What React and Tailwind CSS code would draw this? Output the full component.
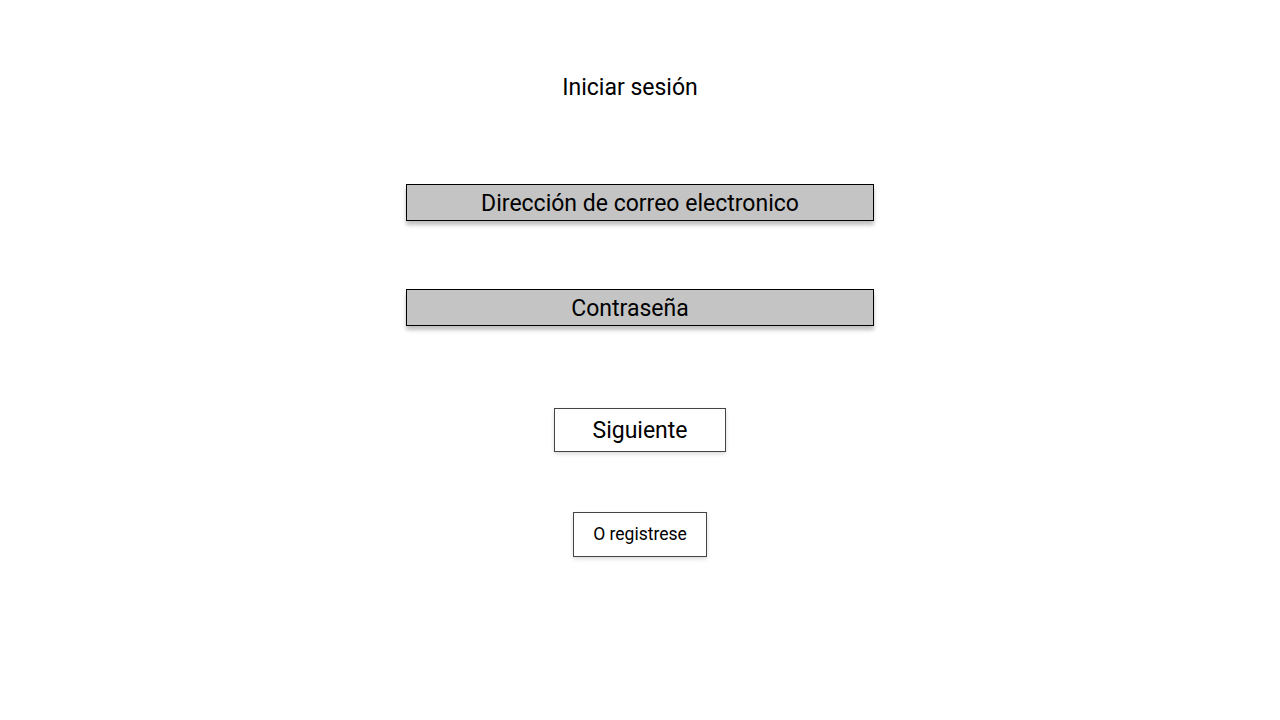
export default function App() {
  return (
    <div
      className="w-[1280px] h-[720px] bg-white flex flex-col items-center text-black"
      style={{ fontFamily: 'Roboto, "Noto Sans", sans-serif' }}
    >
      <div className="pt-[74px] pr-[20px]">
        <h1 className="text-[23px] leading-[28px] font-normal">Iniciar sesión</h1>
      </div>

      <div className="mt-[82px] w-[468px] h-[37px] border border-black bg-[#c4c4c4] shadow-[0_4px_4px_rgba(0,0,0,0.25)] flex items-center justify-center pt-[2px]">
        <span className="text-[23px] leading-none">Dirección de correo electronico</span>
      </div>

      <div className="mt-[68px] w-[468px] h-[37px] border border-black bg-[#c4c4c4] shadow-[0_4px_4px_rgba(0,0,0,0.25)] flex items-center justify-center pt-[2px] pr-[20px]">
        <span className="text-[23px] leading-none">Contraseña</span>
      </div>

      <button className="mt-[82px] w-[172px] h-[44px] border border-[#444444] bg-white shadow-[0_2px_4px_rgba(0,0,0,0.15)] flex items-center justify-center">
        <span className="text-[23px] leading-none">Siguiente</span>
      </button>

      <button className="mt-[60px] w-[134px] h-[45px] border border-[#444444] bg-white shadow-[0_2px_4px_rgba(0,0,0,0.15)] flex items-center justify-center">
        <span className="text-[17.5px] leading-none">O registrese</span>
      </button>
    </div>
  );
}
